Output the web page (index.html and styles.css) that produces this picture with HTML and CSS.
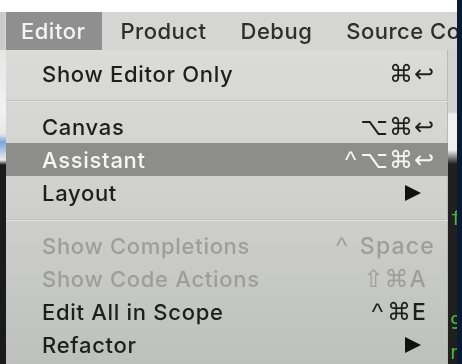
FILE: index.html
```html
<!DOCTYPE html>
<html lang="en">
<head>
    <meta charset="UTF-8">
    <meta name="viewport" content="width=device-width, initial-scale=1.0">
    <title>Editor menu</title>
    <link rel="stylesheet" href="styles.css">
</head>
<body>
    <div class="screen">
        <div class="main">
            <div class="top-strip"></div>

            <nav class="menubar">
                <span class="menubar-item active">Editor</span>
                <span class="menubar-item">Product</span>
                <span class="menubar-item">Debug</span>
                <span class="menubar-item">Source Control</span>
            </nav>

            <div class="below">
                <div class="bg-left"></div>

                <ul class="dropdown">
                    <li class="item">
                        <span class="label">Show Editor Only</span>
                        <span class="keys">⌘↩</span>
                    </li>
                    <li class="separator"></li>
                    <li class="item">
                        <span class="label">Canvas</span>
                        <span class="keys">⌥⌘↩</span>
                    </li>
                    <li class="item selected">
                        <span class="label">Assistant</span>
                        <span class="keys"><span class="caret">^</span>⌥⌘↩</span>
                    </li>
                    <li class="item">
                        <span class="label">Layout</span>
                        <span class="submenu"></span>
                    </li>
                    <li class="separator"></li>
                    <li class="item disabled">
                        <span class="label">Show Completions</span>
                        <span class="keys"><span class="caret">^</span> <span class="key-word">Space</span></span>
                    </li>
                    <li class="item disabled">
                        <span class="label">Show Code Actions</span>
                        <span class="keys">⇧⌘<span class="key-word letter">A</span></span>
                    </li>
                    <li class="item">
                        <span class="label">Edit All in Scope</span>
                        <span class="keys"><span class="caret">^</span>⌘<span class="key-word letter">E</span></span>
                    </li>
                    <li class="item">
                        <span class="label">Refactor</span>
                        <span class="submenu"></span>
                    </li>
                </ul>

                <div class="bg-right">
                    <span class="code-glyph g-f">f</span>
                    <span class="code-glyph g-9">9</span>
                    <span class="code-glyph g-n">n</span>
                </div>
            </div>
        </div>
        <div class="navy-edge"></div>
    </div>
</body>
</html>
```

FILE: styles.css
```css
/* Reset básico */
* {
    margin: 0;
    padding: 0;
    box-sizing: border-box;
}

body {
    width: 462px;
    height: 364px;
    overflow: hidden;
    background-color: #ffffff;
    font-family: 'Inter', 'Liberation Sans', sans-serif;
}

.screen {
    display: flex;
    height: 364px;
    filter: blur(0.6px);
}

.main {
    width: 457px;
    display: flex;
    flex-direction: column;
}

.navy-edge {
    width: 5px;
    background-color: #0b1a34;
}

.top-strip {
    height: 12px;
    background-color: #ffffff;
}

/* barra de menu */
.menubar {
    height: 38px;
    display: flex;
    align-items: stretch;
    padding-left: 1px;
    background-color: #d5d5d3;
    border-left: 5px solid #cbcbc9;
    white-space: nowrap;
    overflow: hidden;
}

.menubar-item {
    display: flex;
    align-items: center;
    padding: 0 16px 0 18px;
    font-size: 22px;
    font-weight: 500;
    letter-spacing: 0.5px;
    color: #2e2e2e;
}

.menubar-item.active {
    padding: 0 17px 0 15px;
    background-color: #8f8f8f;
    color: #f4f4f4;
}

.below {
    flex: 1;
    display: flex;
}

.bg-left {
    width: 6px;
    background: linear-gradient(to bottom,
        #e6e6e6 0, #f2f2f2 60px, #e8e8e8 84px,
        #7aa6d8 92px, #eaeaea 110px,
        #1b1b1b 115px, #1b1b1b 100%);
}

.bg-right {
    width: 9px;
    display: flex;
    flex-direction: column;
    overflow: hidden;
    background: linear-gradient(to bottom,
        #d2d2d0 0, #d2d2d0 62px, #f0f0f0 64px, #f0f0f0 100px,
        #1f1f1f 114px, #1f1f1f 100%);
}

.code-glyph {
    font-family: 'DejaVu Sans Mono', monospace;
    font-size: 20px;
    line-height: 20px;
    color: #4fb340;
    margin-left: 2px;
}

.g-f {
    margin-top: 158px;
}

.g-9 {
    margin-top: 84px;
}

.g-n {
    margin-top: 10px;
}

/* menu suspenso */
.dropdown {
    width: 442px;
    list-style: none;
    padding-top: 7px;
    background: linear-gradient(to bottom, #dbdbd9, #cfd0cd 50%, #bec0bd);
    box-shadow: inset -1px 0 0 #b9b9b7;
}

.item {
    height: 33px;
    display: flex;
    align-items: center;
    justify-content: space-between;
    padding: 0 13px 0 36px;
    font-size: 22px;
    font-weight: 500;
    letter-spacing: 0.7px;
    color: #1e1e1e;
}

.item.selected {
    background-color: #8d8d8c;
    color: #f6f6f6;
}

.item.disabled {
    color: #9d9e9b;
}

.separator {
    height: 20px;
    display: flex;
    align-items: center;
}

.separator::before {
    content: '';
    display: block;
    width: 100%;
    height: 1px;
    background-color: #c2c2c0;
    box-shadow: 0 1px 0 #e2e2e0;
}

.keys {
    font-family: 'DejaVu Sans', sans-serif;
    font-size: 24px;
    letter-spacing: 1px;
}

.caret {
    font-family: 'Liberation Sans', sans-serif;
    font-size: 24px;
    margin-right: 3px;
}

.key-word {
    font-family: 'Inter', 'Liberation Sans', sans-serif;
    font-weight: 500;
    font-size: 23px;
    letter-spacing: 1.2px;
}

.letter {
    margin-right: 8px;
}

.submenu {
    width: 0;
    height: 0;
    margin-right: 14px;
    border-left: 16px solid #111111;
    border-top: 8px solid transparent;
    border-bottom: 8px solid transparent;
}
```
